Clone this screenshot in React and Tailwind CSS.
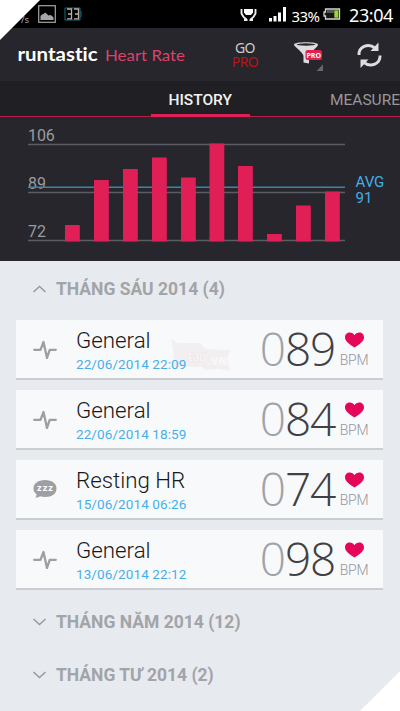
import clsx from "clsx";

const bars = [
  { x: 65, top: 225 },
  { x: 94, top: 180 },
  { x: 123, top: 169 },
  { x: 152, top: 157.5 },
  { x: 181, top: 177.5 },
  { x: 209.5, top: 143.5 },
  { x: 238, top: 166 },
  { x: 267, top: 234 },
  { x: 296, top: 205.5 },
  { x: 325, top: 191.5 },
];

const gridLines = [
  { y: 144.5, label: "106" },
  { y: 192.5, label: "89" },
  { y: 240.5, label: "72" },
];

const entries = [
  { title: "General", date: "22/06/2014 22:09", bpm: "89", icon: "pulse" },
  { title: "General", date: "22/06/2014 18:59", bpm: "84", icon: "pulse" },
  { title: "Resting HR", date: "15/06/2014 06:26", bpm: "74", icon: "sleep" },
  { title: "General", date: "13/06/2014 22:12", bpm: "98", icon: "pulse" },
];

function StatusBar() {
  return (
    <div className="flex h-7 shrink-0 items-center bg-black pl-[21px] pr-[7px] text-white">
      <span className="w-[17px] pt-3 font-['Noto_Sans'] text-[9.500px] leading-none text-[#aaa]">/s</span>
      <svg width="18" height="18" viewBox="0 0 18 18" aria-hidden="true">
        <rect x=".7" y=".7" width="16.6" height="16.6" fill="none" stroke="#a5a5a5" strokeWidth="1.200" />
        <path d="M2.500 15v-4l1.500-1.500 1.500-.5L7 7.500l2 1.500 1.500 1.500 2-.5 1.500 1 1.500 1.500V15z" fill="#a5a5a5" />
      </svg>
      <svg className="ml-2" width="18" height="14" viewBox="0 0 18 14" aria-hidden="true">
        <path d="M1 1h15v12H1zM17 4v6" fill="none" stroke="#176a80" strokeWidth="1" />
        <path d="M3 2h4.500v9.800H3M4 7h3.500M10 2h4.500v9.800H10M11 7h3.500" fill="none" stroke="#b9b0a5" strokeWidth="1.300" />
      </svg>
      <svg className="ml-auto" width="17" height="15" viewBox="0 0 17 15" aria-hidden="true">
        <path d="M4 2h9v3.500l-2 2.500H6L4 5.500z" fill="#fff" />
        <path d="M1.500 2v4.500l2 3.500 3 2.500M15.500 2v4.500l-2 3.500-3 2.500M4 13h3.500M9.500 13H13" fill="none" stroke="#eee" strokeWidth="1.900" />
      </svg>
      <svg className="ml-3" width="18" height="16" viewBox="0 0 18 16" fill="#fff" aria-hidden="true">
        <path d="M0 12h3v3.500H0zM4.500 10h3v5.500h-3zM9 6.500h3v9H9zM14 1h3v14.500h-3z" />
      </svg>
      <span className="ml-[4.500px] w-[27.500px] whitespace-nowrap pt-1 font-['Noto_Sans'] text-[15px] leading-none tracking-[-0.600px]">33%</span>
      <svg className="ml-[4px]" width="18" height="12" viewBox="0 0 18 12" aria-hidden="true">
        <path d="M2.500 1h14v10h-14V8H1V4h1.500z" fill="#151515" stroke="#d5d5d5" strokeWidth="1.300" />
        <path d="M11.300 2.300h4v7.400h-4z" fill="#9bd62f" />
        <path d="M4 2h7v3H4z" fill="#555" />
      </svg>
      <span className="ml-[8px] whitespace-nowrap pt-px font-['Noto_Sans'] text-[18px] leading-none tracking-[-0.400px]">23:04</span>
    </div>
  );
}

function FunnelIcon() {
  return (
    <svg width="32" height="32" viewBox="0 0 32 32" aria-hidden="true">
      <path d="M1 5.500C1 2.500 25 2.500 25 5.500c0 2-3 4-5 6-3 2.500-4 4-4 6V24.500l-5.500-1V17.500c0-2-1.500-3.500-4.500-6.500C4 9 1 7 1 5.500z" fill="#ddd" />
      <ellipse cx="13" cy="5.500" rx="9.500" ry="1.200" fill="#27262c" />
      <rect x="12.500" y="11" width="16.500" height="10" rx="2" fill="#df2050" />
      <text x="20.700" y="18.800" textAnchor="middle" textLength="14.500" lengthAdjust="spacingAndGlyphs" fill="#fff" className="font-['Noto_Sans'] text-[7.500px] font-bold">
        PRO
      </text>
      <path d="M30 25.500v6.500h-6.500z" fill="#68686c" />
    </svg>
  );
}

function RefreshIcon() {
  return (
    <svg width="25" height="26" viewBox="0 0 25 26" aria-hidden="true">
      <g id="half-turn">
        <path d="M2 13C1.500 5 11 .5 18 6" fill="none" stroke="#ddd" strokeWidth="2.900" />
        <path d="M21.500.5v8.500h-8z" fill="#ddd" />
      </g>
      <use href="#half-turn" transform="rotate(180 12.500 13.250)" />
    </svg>
  );
}

function Header() {
  return (
    <header className="flex h-[53px] shrink-0 items-center bg-[#27262c] pr-[18.500px]">
      <svg width="200" height="53" viewBox="0 0 200 53" aria-label="runtastic Heart Rate">
        <text x="17.500" y="32.500" textLength="80" lengthAdjust="spacingAndGlyphs" fill="#fff" className="font-['Lato'] text-[19px] font-bold [font-variant-ligatures:none]">
          runtastic
        </text>
        <text x="105" y="32.500" textLength="80" lengthAdjust="spacingAndGlyphs" fill="#dc4268" className="font-['Lato'] text-[16px]">
          Heart Rate
        </text>
      </svg>
      <div className="ml-[30px] w-[30px] text-center font-['Noto_Sans'] text-[14px] leading-[14px] tracking-[-0.500px]">
        <div className="text-[#ccc]">GO</div>
        <div className="text-[#b5161b]">PRO</div>
      </div>
      <div className="ml-[33px]">
        <FunnelIcon />
      </div>
      <div className="ml-auto">
        <RefreshIcon />
      </div>
    </header>
  );
}

function Tabs() {
  return (
    <nav className="flex h-9 shrink-0 items-stretch border-b border-[#b51f49] bg-[#201f24] pl-[150.500px] font-[Roboto] leading-none">
      <div className="-mb-px flex w-[99.500px] items-center justify-center border-b-[3px] border-[#df2056] pt-[7px] text-[15.500px] font-medium text-[#f2f2f2]">HISTORY</div>
      <div className="flex items-center whitespace-nowrap pl-20 pt-[5px] text-[15.500px] text-[#98979b]">MEASURE</div>
    </nav>
  );
}

function HistoryChart() {
  return (
    <svg className="block shrink-0 bg-[#27262c] font-[Roboto]" width="400" height="144" viewBox="0 117 400 144" role="img" aria-label="Heart rate history">
      {gridLines.map((line) => (
        <g key={line.label}>
          <path d={`M28 ${line.y}H345`} stroke="#5c5d62" strokeWidth="1.400" />
          <text x="28" y={line.y - 4} fill="#9b9b9f" className="text-[16px] tracking-[-0.100px]">
            {line.label}
          </text>
        </g>
      ))}
      <path d="M28 187.200H345" stroke="#3a86aa" strokeWidth="1.600" />
      {bars.map((bar) => (
        <rect key={bar.x} x={bar.x} y={bar.top} width="14.800" height={241.5 - bar.top} fill="#e01f56" />
      ))}
      <g fill="#45aee6" className="text-[15px]">
        <text x="355.500" y="186.700">AVG</text>
        <text x="355.500" y="202.500">91</text>
      </g>
    </svg>
  );
}

function MonthHeading({ open, children, className }) {
  return (
    <h2 className={clsx("flex items-center pl-[33px] font-[Roboto] text-[17.500px] font-bold leading-none text-[#a2a4a8]", className)}>
      <svg className="mr-[10px]" width="13" height="8" viewBox="0 0 13 8" fill="none" aria-hidden="true">
        <path d={open ? "M.5 7l6-5.500 6 5.500" : "M.5 1l6 5.500 6-5.500"} stroke="#96989c" strokeWidth="1.400" />
      </svg>
      <span className="pt-0.5">{children}</span>
    </h2>
  );
}

function EntryIcon({ type }) {
  if (type === "sleep") {
    return (
      <svg width="24" height="20" viewBox="0 0 24 20" aria-hidden="true">
        <path d="M12 1c7 0 11.500 3.500 11.500 8.500S19 18 12 18c-1.800 0-3.500-.2-5-.7-1.500 1-3 1.400-4.800 1.500.9-1 1.400-2.300 1.300-3.500C1.500 13.800.5 11.800.5 9.500.5 4.500 5 1 12 1z" fill="#9d9fa3" />
        <text x="12" y="12.200" textAnchor="middle" textLength="16" fill="#fff" className="font-['Open_Sans'] text-[9.500px] font-bold">
          zzz
        </text>
      </svg>
    );
  }
  return (
    <svg width="24" height="20" viewBox="0 0 24 20" fill="none" aria-hidden="true">
      <path d="M1.200 10.800h6.300L10.500 3l3.500 16 2.700-8.200h6.100" stroke="#9d9fa3" strokeWidth="2.300" strokeLinecap="round" strokeLinejoin="round" />
    </svg>
  );
}

function Watermark() {
  return (
    <svg className="absolute left-[154px] top-[18px]" width="62" height="36" viewBox="0 0 62 36" aria-hidden="true">
      <path d="M1 1l7 4h22l5 6 25 1-3 9 3 12-12-2-12 1-4-3H2l2-13z" fill="#f2eff1" />
      <text x="18" y="24" textLength="18" lengthAdjust="spacingAndGlyphs" fill="#fbf6f6" stroke="#e9e1e5" strokeWidth=".6" className="font-['Open_Sans'] text-[16px] font-extrabold">
        taq
      </text>
      <text x="38" y="27" textLength="19" lengthAdjust="spacingAndGlyphs" fill="#fbf6f6" className="font-['Open_Sans'] text-[10px] font-extrabold">
        .VN
      </text>
    </svg>
  );
}

function EntryCard({ entry, marked }) {
  return (
    <li className="relative flex h-[60px] items-center border-b-2 border-[#cbcdd1] bg-[#f8f9fb] pl-[17px] pr-[14px] font-[Roboto]">
      {marked ? <Watermark /> : null}
      <EntryIcon type={entry.icon} />
      <div className="relative ml-[19px] pt-px">
        <div className="text-[22.300px] font-light leading-[26px] text-[#18181a]">{entry.title}</div>
        <div className="pt-[3px] text-[13.500px] leading-4 tracking-[0.100px] text-[#45b0e8]">{entry.date}</div>
      </div>
      <div className="ml-auto flex items-center">
        <span className="-mt-[3px] pr-1 font-['Open_Sans'] text-[46px] font-light leading-[56px] tracking-[-1.200px] text-[#3f4145]">
          <span className="text-[#a0a2a6]">0</span>
          {entry.bpm}
        </span>
        <div className="flex w-[30px] flex-col items-center gap-[5px] pt-px">
          <svg width="19" height="16" viewBox="0 0 19 16" aria-hidden="true">
            <path d="M9.500 15.500C4 12 0 9 0 5.200 0 2.300 2.200.5 4.700.5c2 0 3.700 1 4.800 2.800C10.600 1.500 12.300.5 14.300.5 16.800.5 19 2.300 19 5.200c0 3.800-4 6.800-9.500 10.300z" fill="#e5065a" />
          </svg>
          <span className="text-[14px] font-light leading-[14px] tracking-[-0.300px] text-[#96989c]">BPM</span>
        </div>
      </div>
    </li>
  );
}

export default function App() {
  return (
    <div className="relative flex h-[711px] w-[400px] flex-col overflow-hidden bg-[#e7eaef] font-[Roboto]">
      <StatusBar />
      <Header />
      <Tabs />
      <HistoryChart />
      <main>
        <MonthHeading open className="h-[59px] pb-1">THÁNG SÁU 2014 (4)</MonthHeading>
        <ul className="grid gap-[10px] pl-4 pr-[17px]">
          {entries.map((entry, i) => (
            <EntryCard key={entry.date} entry={entry} marked={i === 0} />
          ))}
        </ul>
        <MonthHeading className="h-[53px] pt-[11px]">THÁNG NĂM 2014 (12)</MonthHeading>
        <MonthHeading className="h-[53px] pt-[11px]">THÁNG TƯ 2014 (2)</MonthHeading>
      </main>
      <div className="absolute left-0 top-0 size-10 bg-white [clip-path:polygon(0_0,100%_0,0_100%)]" />
      <div className="absolute bottom-0 right-0 size-10 bg-white [clip-path:polygon(100%_0,100%_100%,0_100%)]" />
    </div>
  );
}
